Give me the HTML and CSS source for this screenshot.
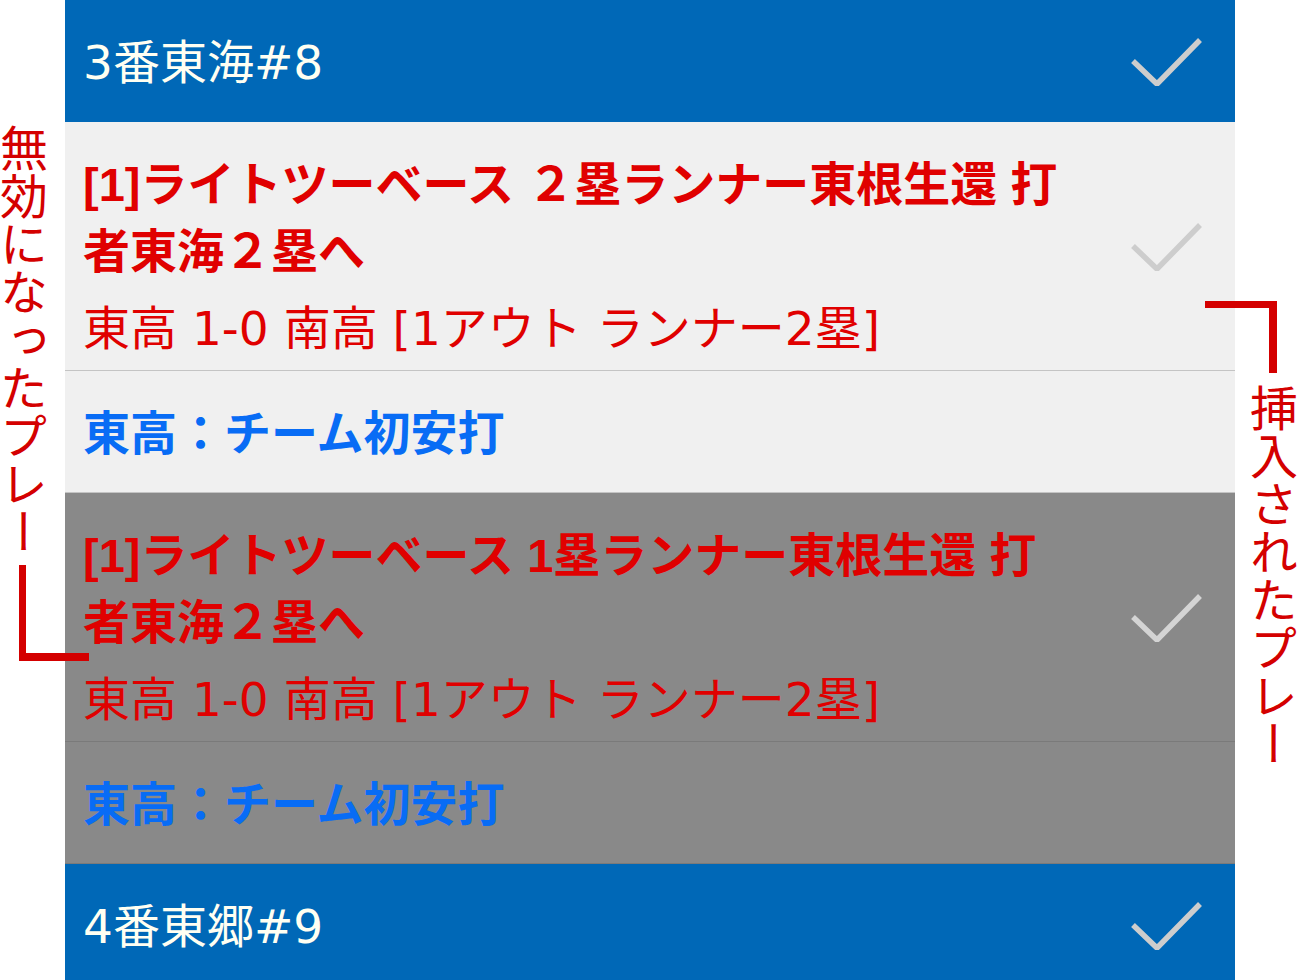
FILE: index.html
```html
<!DOCTYPE html>
<html lang="ja">
<head>
<meta charset="utf-8">
<title>プレー一覧</title>
<link rel="stylesheet" href="styles.css">
</head>
<body>
<div class="page">
  <aside class="note note-left">
    <p class="note-text">無効になったプレー</p>
    <div class="bracket bracket-left"></div>
  </aside>

  <main class="list">
    <div class="header">
      <span class="header-title">3番東海#8</span>
      <svg class="check" viewBox="0 0 72 50" width="72" height="50"><polyline points="3,25 27,48 70,4" /></svg>
    </div>

    <div class="play">
      <div class="play-body">
        <p class="play-title">[1]ライトツーベース ２塁ランナー東根生還 打者東海２塁へ</p>
        <p class="play-score">東高 1-0 南高 [1アウト ランナー2塁]</p>
      </div>
      <svg class="check" viewBox="0 0 72 50" width="72" height="50"><polyline points="3,25 27,48 70,4" /></svg>
    </div>
    <div class="note-row">
      <p class="note-row-text">東高：チーム初安打</p>
    </div>

    <div class="play play-dim">
      <div class="play-body">
        <p class="play-title">[1]ライトツーベース 1塁ランナー東根生還 打者東海２塁へ</p>
        <p class="play-score">東高 1-0 南高 [1アウト ランナー2塁]</p>
      </div>
      <svg class="check" viewBox="0 0 72 50" width="72" height="50"><polyline points="3,25 27,48 70,4" /></svg>
    </div>
    <div class="note-row note-row-dim">
      <p class="note-row-text">東高：チーム初安打</p>
    </div>

    <div class="header">
      <span class="header-title">4番東郷#9</span>
      <svg class="check" viewBox="0 0 72 50" width="72" height="50"><polyline points="3,25 27,48 70,4" /></svg>
    </div>
  </main>

  <aside class="note note-right">
    <div class="bracket bracket-right"></div>
    <p class="note-text">挿入されたプレー</p>
  </aside>
</div>
</body>
</html>
```

FILE: styles.css
```css
html, body {
  margin: 0;
  padding: 0;
  background: #ffffff;
}

body {
  font-family: "Noto Sans CJK JP", "Noto Sans", sans-serif;
  width: 1300px;
  height: 980px;
  overflow: hidden;
}

p {
  margin: 0;
}

.page {
  display: flex;
  align-items: flex-start;
  width: 1300px;
  height: 980px;
}

/* annotations */
.note {
  width: 65px;
  flex: none;
  display: flex;
  flex-direction: column;
  position: relative;
  z-index: 2;
}

.note-text {
  writing-mode: vertical-rl;
  text-orientation: upright;
  font-size: 48px;
  line-height: 48px;
  color: #d40000;
  width: 48px;
}

.note-left {
  padding-top: 124px;
}

.bracket {
  box-sizing: border-box;
  flex: none;
}

.bracket-left {
  margin-top: 9px;
  margin-left: 19px;
  width: 70px;
  height: 96px;
  border-left: 7px solid #d40000;
  border-bottom: 8px solid #d40000;
}

.note-right {
  padding-top: 301px;
}

.bracket-right {
  margin-left: -30px;
  width: 72px;
  height: 72px;
  border-top: 7px solid #d40000;
  border-right: 8px solid #d40000;
}

.note-right .note-text {
  margin-top: 11px;
  margin-left: 15px;
}

/* list */
.list {
  width: 1170px;
  flex: none;
  position: relative;
  z-index: 1;
}

.header {
  box-sizing: border-box;
  height: 122px;
  background: #0068b7;
  display: flex;
  align-items: center;
  justify-content: space-between;
  padding: 0 33px 0 18px;
}

.header-title {
  font-family: "DejaVu Sans", "Noto Sans CJK JP", sans-serif;
  font-size: 47px;
  line-height: 67px;
  color: #fffff2;
  margin-top: 2px;
}

.check {
  flex: none;
  display: block;
}

.check polyline {
  fill: none;
  stroke: #cdcdcd;
  stroke-width: 5.5;
  stroke-linecap: butt;
  stroke-linejoin: miter;
}

.play {
  display: flex;
  align-items: center;
  gap: 55px;
  padding: 0 33px 0 18px;
  background: #f0f0f0;
  border-bottom: 1px solid #c4c4c4;
}

.play-body {
  flex: 1;
  min-width: 0;
  padding: 29px 0 8px;
}

.play-title {
  font-family: "Liberation Sans", "Noto Sans CJK JP", sans-serif;
  font-size: 47px;
  line-height: 67px;
  font-weight: 700;
  color: #e00000;
}

.play-score {
  font-family: "DejaVu Sans", "Noto Sans CJK JP", sans-serif;
  margin-top: 10px;
  font-size: 47px;
  line-height: 67px;
  font-weight: 400;
  color: #e00000;
}

.note-row {
  padding: 25px 18px 29px;
  background: #f0f0f0;
  border-bottom: 1px solid #c4c4c4;
}

.note-row-text {
  font-size: 47px;
  line-height: 67px;
  font-weight: 700;
  color: #086cf5;
}

.play-dim,
.note-row-dim {
  background: #898989;
  border-bottom-color: #7a7a7a;
}

.play-dim .check polyline {
  stroke: #d4d4d4;
}
```
